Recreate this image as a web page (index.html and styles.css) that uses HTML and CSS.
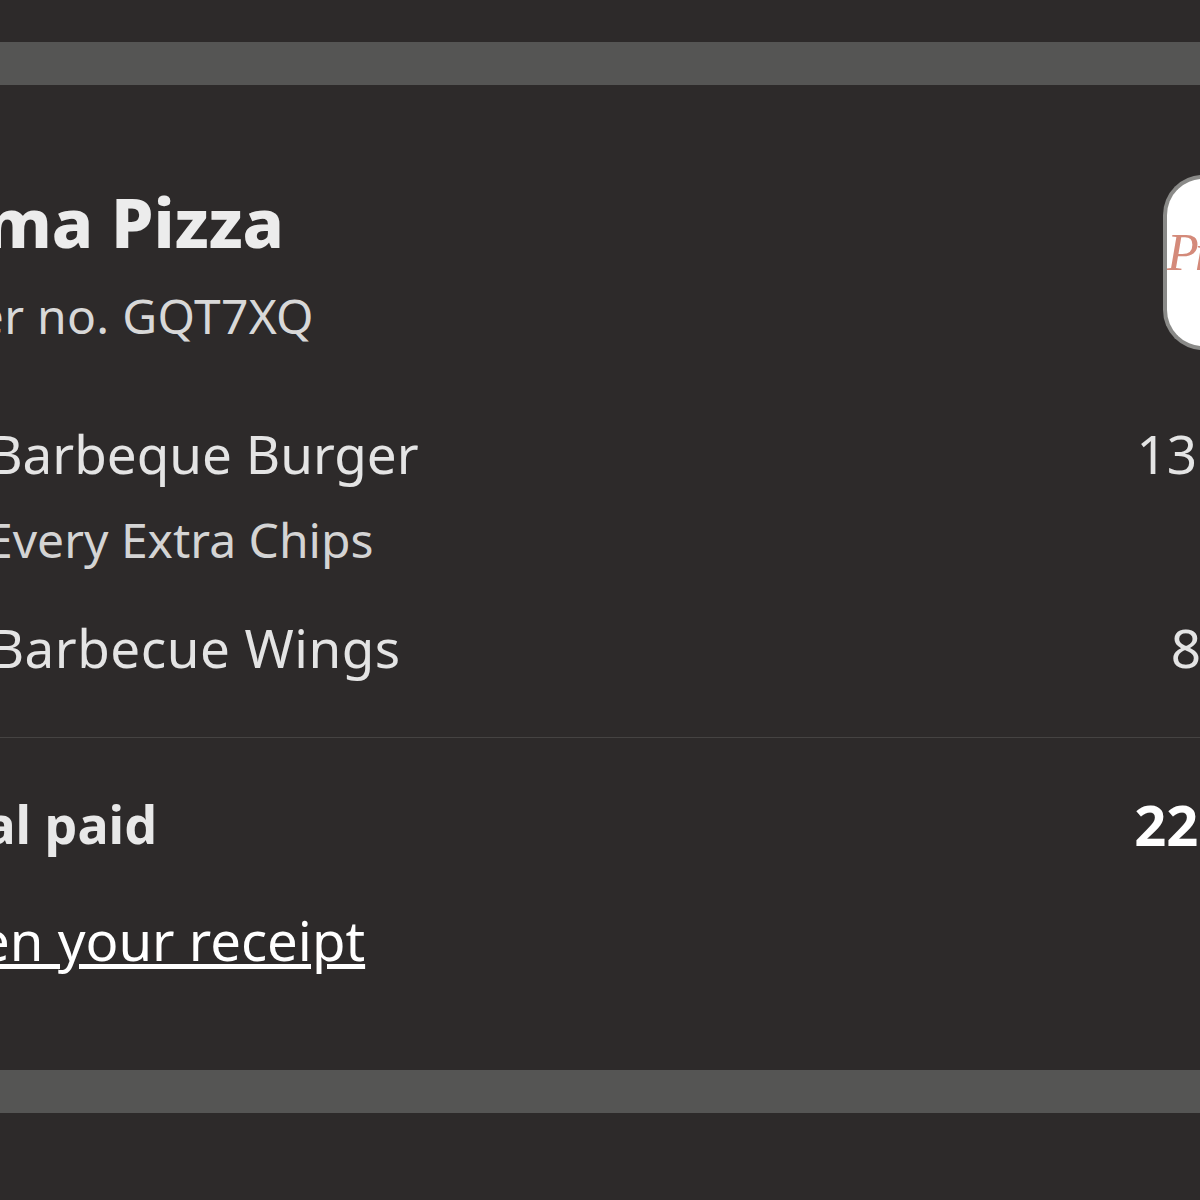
FILE: index.html
```html
<!DOCTYPE html>
<html lang="en">
<head>
    <meta charset="UTF-8"/>
    <title>Order receipt</title>
    <link rel="stylesheet" href="styles.css">
</head>
<body>

<div class="band band-top"></div>

<main class="order">
    <div class="order-head">
        <div class="order-title">
            <h1>Prima Pizza</h1>
            <p>Order no. GQT7XQ</p>
        </div>
        <div class="logo"><span>Prima</span></div>
    </div>

    <div class="item">
        <span class="item-name">1x Barbeque Burger</span>
        <span class="item-price">13.50</span>
    </div>
    <div class="item-extra">Every Extra Chips</div>
    <div class="item item-last">
        <span class="item-name">1x Barbecue Wings</span>
        <span class="item-price">8.50</span>
    </div>

    <div class="total">
        <span>Total paid</span>
        <span class="total-price">22.00</span>
    </div>
    <a class="receipt" href="#">Open your receipt</a>
</main>

<div class="band"></div>

</body>
</html>
```

FILE: styles.css
```css
* {
    box-sizing: border-box;
}

html, body {
    height: 100%;
}

body {
    margin: 0;
    overflow: hidden;
    background-color: #2d2a2a;
    color: #e8e8e8;
    font-family: 'Noto Sans', sans-serif;
}

.band {
    height: 43px;
    background-color: #555554;
}

.band-top {
    margin-top: 42px;
}

.order {
    height: 985px;
    margin: 0 -72px 0 -110px;
    padding-top: 96px;
}

.order-head {
    display: flex;
    justify-content: space-between;
    height: 175px;
}

.order-title h1 {
    margin: 1px 0 0;
    font-size: 68px;
    line-height: 80px;
    font-weight: 800;
    color: #ececec;
}

.order-title p {
    margin: 26px 0 0;
    font-size: 48px;
    line-height: 56px;
    letter-spacing: 0.3px;
    color: #d8d8d8;
}

.logo {
    width: 109px;
    height: 175px;
    margin-top: -6px;
    border: 4px solid #8a8a88;
    border-right: 0;
    border-radius: 40px 0 0 40px;
    background-color: #fff;
    overflow: hidden;
}

.logo span {
    display: block;
    margin-top: 44px;
    font-family: 'Liberation Serif', serif;
    font-style: italic;
    font-size: 52px;
    line-height: 60px;
    letter-spacing: -4px;
    color: #d48a7a;
}

.item {
    display: flex;
    justify-content: space-between;
    margin-top: 66px;
    padding-left: 26px;
    font-size: 53px;
    line-height: 64px;
    color: #e4e4e4;
}

.item-extra {
    margin-top: 26px;
    padding-left: 96px;
    font-size: 48px;
    line-height: 56px;
    color: #d4d4d4;
}

.item-last {
    margin-top: 48px;
}

.item-last .item-name {
    letter-spacing: 0.5px;
}

.item-last .item-price {
    margin-right: -4px;
}

.total {
    display: flex;
    justify-content: space-between;
    margin-top: 57px;
    padding: 53px 0 0 13px;
    border-top: 1px solid #454342;
    font-size: 52px;
    line-height: 66px;
    font-weight: 700;
}

.total-price {
    margin-right: -6px;
    font-size: 56px;
    color: #fff;
}

.receipt {
    display: block;
    margin-top: 50px;
    padding-left: 13px;
    font-size: 54.5px;
    line-height: 66px;
    color: #fff;
}
```
